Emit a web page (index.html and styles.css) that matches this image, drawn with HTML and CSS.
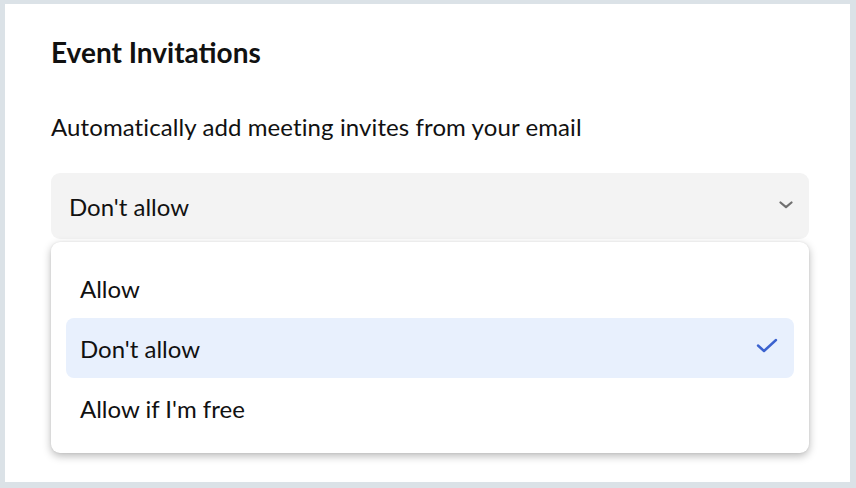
FILE: index.html
```html
<!DOCTYPE html>
<html>
<head>
<meta charset="utf-8">
<link rel="stylesheet" href="styles.css">
</head>
<body>
<div class="card">
  <h1 class="title">Event Invitations</h1>
  <p class="label">Automatically add meeting invites from your email</p>
  <div class="select-wrap">
    <div class="select">
      <span>Don't allow</span>
      <svg class="chevron" width="14" height="8" viewBox="0 0 14 8"><path d="M1.5 1.5 L7 6.2 L12.5 1.5" fill="none" stroke="#707070" stroke-width="2.2" stroke-linecap="round" stroke-linejoin="round"/></svg>
    </div>
    <div class="menu">
      <div class="option">Allow</div>
      <div class="option selected">
        <span>Don't allow</span>
        <svg class="check" width="22" height="16" viewBox="0 0 22 16"><path d="M2 7.5 L8 13 L20 2" fill="none" stroke="#3b62cf" stroke-width="2.4" stroke-linecap="round" stroke-linejoin="round"/></svg>
      </div>
      <div class="option">Allow if I'm free</div>
    </div>
  </div>
</div>
</body>
</html>
```

FILE: styles.css
```css
* { box-sizing: border-box; }
html, body { margin: 0; padding: 0; }
body {
  background: #dbe2e7;
  font-family: Lato, "Open Sans", sans-serif;
  color: #111;
  width: 856px;
  height: 488px;
  overflow: hidden;
}
.card {
  background: #fff;
  margin: 4px 6px 0 5px;
  height: 478px;
  padding: 31px 41px 0 46px;
}
.title {
  margin: 0;
  font-size: 28px;
  font-weight: 700;
  line-height: 34px;
}
.label {
  margin: 43px 0 0;
  font-size: 24px;
  line-height: 30px;
  letter-spacing: 0.1px;
}
.select-wrap {
  position: relative;
  margin-top: 31px;
}
.select {
  height: 66px;
  background: #f3f3f3;
  border-radius: 9px;
  display: flex;
  align-items: center;
  justify-content: space-between;
  padding: 0 16px 0 18px;
  font-size: 24px;
}
.chevron { margin-top: -3px; }
.menu {
  position: absolute;
  left: 0;
  right: 0;
  top: 69px;
  background: #fff;
  border-radius: 9px;
  box-shadow: 0 3px 9px rgba(0,0,0,0.28), 0 0 2px rgba(0,0,0,0.08);
  padding: 16px 15px 15px;
}
.option {
  height: 60px;
  display: flex;
  align-items: center;
  justify-content: space-between;
  padding: 0 16px 0 14px;
  font-size: 24px;
  border-radius: 8px;
}
.option.selected { background: #e8f0fd; }
.check { margin-top: -4px; }
```
